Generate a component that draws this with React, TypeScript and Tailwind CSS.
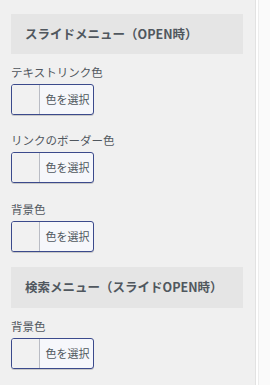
import React from 'react';

const ColorButton: React.FC = () => (
  <button className="flex h-[31px] w-[83px] overflow-hidden rounded-[3px] border border-[#3b4a8c] bg-[#f6f7fb] shadow-[0_1px_0_#c8c8c8]">
    <span className="h-full w-[28px] border-r border-[#b9bcc4] bg-[#f1f1f1]" />
    <span className="flex flex-1 items-center justify-center pl-[2px] text-[11px] text-[#50575e]">色を選択</span>
  </button>
);

const Field: React.FC<{ label: string; top: string }> = ({ label, top }) => (
  <div className={`flex flex-col gap-[5px] ${top}`}>
    <div className="text-[11.5px] leading-[14px] text-[#50575e]">{label}</div>
    <ColorButton />
  </div>
);

export default function App() {
  return (
    <div className="flex h-[385px] w-[270px] overflow-hidden bg-[#f0f0f0]" style={{ fontFamily: '"Noto Sans CJK JP", "Noto Sans", sans-serif' }}>
      <div className="w-[255px] shrink-0 pl-[11px] pr-[12px] pt-[14px]">
        <div className="flex h-[40px] items-center bg-[#e5e5e5] pl-[14px] text-[12.5px] font-bold text-[#50575e]">スライドメニュー（OPEN時）</div>
        <Field label="テキストリンク色" top="mt-[11px]" />
        <Field label="リンクのボーダー色" top="mt-[18px]" />
        <Field label="背景色" top="mt-[19px]" />
        <div className="mt-[15px] flex h-[41px] items-center bg-[#e5e5e5] pl-[14px] text-[12.5px] font-bold text-[#50575e]">検索メニュー（スライドOPEN時）</div>
        <Field label="背景色" top="mt-[11px]" />
      </div>
      <div className="flex-1 border-l border-[#e2e2e2] bg-white">
        <div className="ml-[2px] h-full border-l border-[#ececec] bg-[#fafafa]" />
      </div>
    </div>
  );
}
